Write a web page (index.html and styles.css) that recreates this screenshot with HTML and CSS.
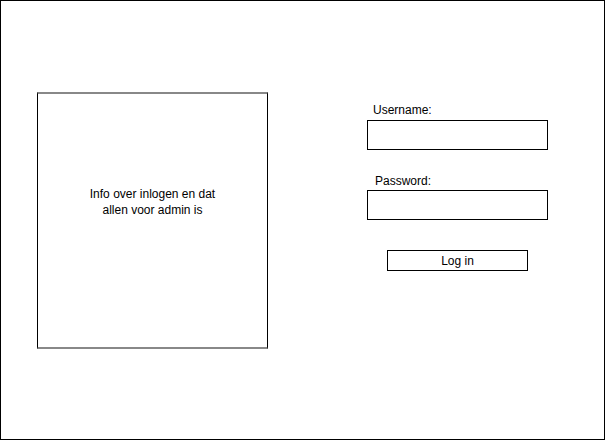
FILE: index.html
```html
<!DOCTYPE html>
<html lang="nl">
<head>
    <meta charset="UTF-8">
    <meta name="viewport" content="width=device-width, initial-scale=1.0">
    <title>Admin login</title>
    <link rel="stylesheet" href="styles.css">
</head>
<body>
    <div class="frame">
        <div class="info">
            <p>Info over inlogen en dat allen voor admin is</p>
        </div>
        <form class="login" onsubmit="return false">
            <label class="label" for="username">Username:</label>
            <input class="field" id="username" type="text">
            <label class="label label-pass" for="password">Password:</label>
            <input class="field" id="password" type="password">
            <button class="button" type="submit">Log in</button>
        </form>
    </div>
</body>
</html>
```

FILE: styles.css
```css
body {
    margin: 0;
    background: #fff;
    font-family: "Liberation Sans", Arial, sans-serif;
    font-size: 12px;
    color: #000;
}
.frame {
    width: 605px;
    height: 440px;
    border: 1px solid #000;
    box-sizing: border-box;
    display: flex;
    align-items: flex-start;
    padding: 91px 0 0 36px;
}
.info {
    width: 231px;
    height: 257px;
    border-left: 1px solid #000;
    border-right: 1px solid #000;
    border-top: 2px solid #888;
    border-bottom: 2px solid #888;
    box-sizing: border-box;
    display: flex;
    align-items: center;
    justify-content: center;
    text-align: center;
    padding-bottom: 38px;
}
.info p {
    width: 150px;
    margin: 0;
    line-height: 16px;
}
.login {
    display: flex;
    flex-direction: column;
    align-items: flex-start;
    margin-left: 99px;
    padding-top: 11px;
}
.label {
    line-height: 14px;
    padding-left: 6px;
    margin-bottom: 3px;
}
.label-pass {
    padding-left: 8px;
    margin-top: 24px;
    margin-bottom: 2px;
}
.field {
    width: 181px;
    height: 30px;
    border: 1px solid #000;
    box-sizing: border-box;
    margin: 0;
    padding: 0 4px;
    background: #fff;
    font: inherit;
}
.button {
    width: 141px;
    height: 21px;
    margin: 30px 0 0 20px;
    border: 1px solid #000;
    box-sizing: border-box;
    background: #fff;
    padding: 0;
    font: inherit;
    color: #000;
}
```
